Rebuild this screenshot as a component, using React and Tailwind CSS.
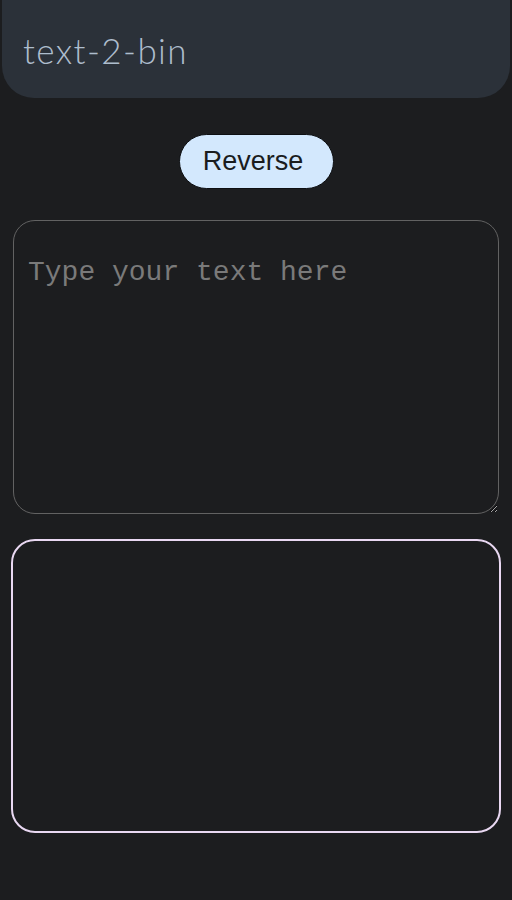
export default function App() {
  return (
    <div className="min-h-[900px] w-[512px] bg-[#1c1d1f] flex flex-col">
      {/* Header */}
      <div className="mx-[2px] h-[98px] bg-[#2b3139] rounded-b-[32px] flex items-center pl-[21px] pt-[2px]">
        <h1 className="text-[35px] font-light text-[#aebdcd] tracking-[1.4px] font-['Lato',sans-serif]">
          text-2-bin
        </h1>
      </div>

      {/* Reverse */}
      <div className="flex justify-center mt-[36px]">
        <button className="w-[155px] h-[55px] pr-[6px] rounded-full bg-[#d3e8fd] border-[1.5px] border-[#0d0f12] text-[27px] text-[#1a1c1e] font-['Liberation_Sans',Arial,sans-serif]">
          Reverse
        </button>
      </div>

      {/* Input */}
      <textarea
        placeholder="Type your text here"
        className="mt-[31px] mx-[13px] h-[294px] w-[486px] rounded-[22px] border border-[#626262] bg-transparent px-[14px] pt-[36px] pb-[32px] text-[28px] leading-[32px] text-[#cfcfcf] placeholder:text-[#7a7a7a] font-['Liberation_Mono','Courier_New',monospace] outline-none"
      />

      {/* Output */}
      <div className="mt-[25px] mx-[11px] h-[294px] w-[490px] rounded-[24px] border-2 border-[#e9d8f2]"></div>
    </div>
  );
}
